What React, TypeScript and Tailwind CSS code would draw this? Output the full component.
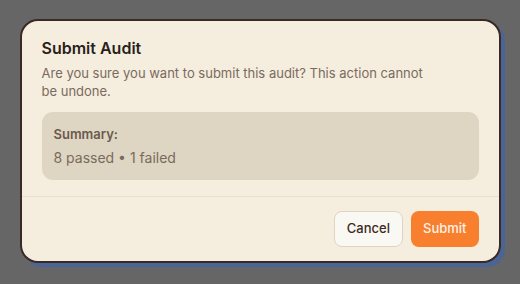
export default function App() {
  return (
    <div
      className="w-[520px] h-[284px] bg-[#666666] flex items-center justify-center"
      style={{ fontFamily: 'Inter, "Liberation Sans", sans-serif' }}
    >
      <div className="w-[481px] -translate-y-px bg-[#f5eedf] border-2 border-[#3b2a24] rounded-[18px] shadow-[4px_4px_0_0_#4a6595] overflow-hidden">
        {/* Header + summary */}
        <div className="px-5 pt-[15px] pb-4">
          <h2 className="text-[16px] leading-6 font-semibold text-[#2b1f1a]">Submit Audit</h2>
          <p className="mt-1 text-[13px] leading-[18px] text-[#7a6a5e] max-w-[392px]">
            Are you sure you want to submit this audit? This action cannot be undone.
          </p>
          <div className="mt-3 rounded-[11px] bg-[#ded6c2] px-3 py-3">
            <div className="text-[13px] leading-5 font-semibold text-[#6b5a4e]">Summary:</div>
            <div className="mt-1 text-[14px] leading-5 text-[#7a6a5e]">8 passed • 1 failed</div>
          </div>
        </div>
        {/* Footer */}
        <div className="border-t border-[#e8dfcc] px-5 pt-3.5 pb-[14px] flex justify-end gap-2">
          <button className="h-9 px-3 rounded-lg bg-[#faf8f2] border border-[#ddd4c3] text-[13px] font-medium text-[#3b2a24]">
            Cancel
          </button>
          <button className="h-9 px-3 rounded-lg bg-[#f77f2d] text-[13px] font-medium text-[#fdf1e6]">
            Submit
          </button>
        </div>
      </div>
    </div>
  );
}
